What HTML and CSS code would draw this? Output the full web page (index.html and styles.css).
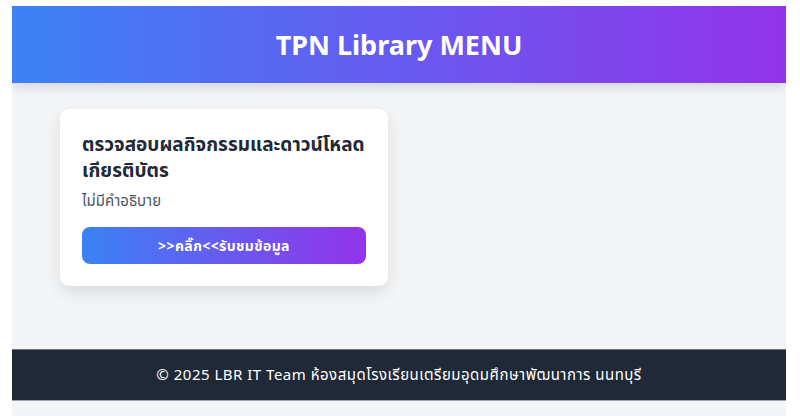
FILE: index.html
```html
<!DOCTYPE html>
<html lang="th">
<head>
  <meta charset="UTF-8" />
  <meta name="viewport" content="width=device-width, initial-scale=1" />
  <title>TPN Library MENU</title>
  <link rel="stylesheet" href="styles.css">
</head>
<body>
  <header class="top-bar">
    <h1>TPN Library MENU</h1>
  </header>

  <main class="menu-grid">
    <div class="menu-card">
      <h2>ตรวจสอบผลกิจกรรมและดาวน์โหลดเกียรติบัตร</h2>
      <p>ไม่มีคำอธิบาย</p>
      <a class="menu-btn" href="#">&gt;&gt;คลิ๊ก&lt;&lt;รับชมข้อมูล</a>
    </div>
  </main>

  <footer class="bottom-bar">
    © 2025 LBR IT Team ห้องสมุดโรงเรียนเตรียมอุดมศึกษาพัฒนาการ นนทบุรี
  </footer>
</body>
</html>
```

FILE: styles.css
```css
html {
  background: #fff;
}
body {
  font-family: "Noto Sans", "Noto Sans Thai", "Noto Sans CJK SC", sans-serif;
  background: #f3f4f6;
  color: #1f2937;
  margin: 6px 14px 0 12px;
  min-height: 410px;
}
.top-bar {
  height: 77px;
  display: flex;
  align-items: center;
  justify-content: center;
  background: linear-gradient(90deg, #3b82f6, #9333ea);
  box-shadow: 0 4px 10px rgba(0, 0, 0, 0.12);
}
.top-bar h1 {
  margin: 0;
  color: white;
  font-size: 27px;
  font-weight: 700;
}
.menu-grid {
  display: grid;
  grid-template-columns: 328px;
  padding: 26px 48px;
  min-height: 214px;
}
.menu-card {
  background: white;
  border-radius: 9px;
  padding: 22px 22px 22px;
  box-shadow: 0 6px 16px rgba(0, 0, 0, 0.1);
  align-self: start;
}
.menu-card h2 {
  margin: 0;
  font-size: 19px;
  line-height: 26px;
  font-weight: 700;
  color: #1f2937;
}
.menu-card p {
  margin: 7px 0 14px;
  font-size: 15px;
  color: #4b5563;
}
.menu-btn {
  display: block;
  height: 37px;
  line-height: 37px;
  text-align: center;
  border-radius: 8px;
  background: linear-gradient(90deg, #3b82f6, #9333ea);
  color: white;
  font-weight: 700;
  font-size: 14px;
  letter-spacing: 0.4px;
  text-decoration: none;
}
.bottom-bar {
  height: 52px;
  display: flex;
  align-items: center;
  justify-content: center;
  background: #1f2937;
  color: white;
  font-size: 15px;
  letter-spacing: 0.5px;
  border-top: 1px solid #6b7280;
  border-bottom: 1px solid #9ca3af;
  box-sizing: border-box;
}
```
